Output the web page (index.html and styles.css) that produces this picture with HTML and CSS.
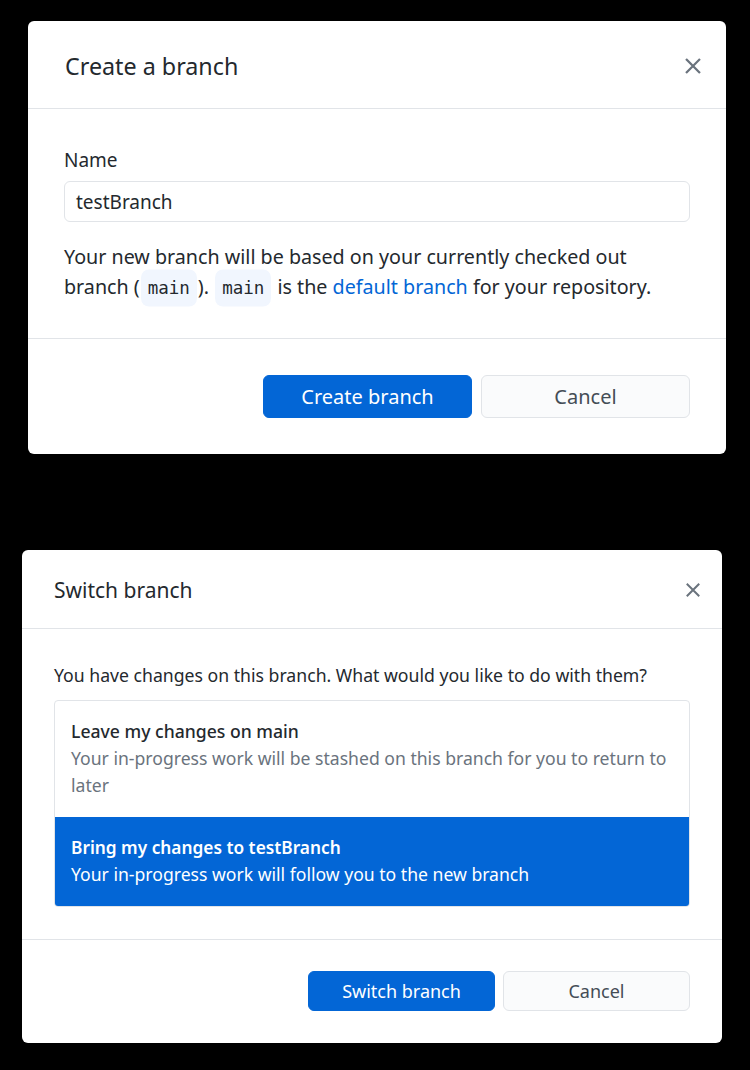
FILE: index.html
```html
<!DOCTYPE html>
<html lang="en">
<head>
<meta charset="utf-8">
<title>Branch dialogs</title>
<link rel="stylesheet" href="styles.css">
</head>
<body>
<div class="page">
  <section class="dialog dialog-create">
    <header class="dialog-header">
      <h1 class="dialog-title">Create a branch</h1>
      <span class="close" aria-label="Close">
        <svg viewBox="0 0 16 16" width="18" height="18"><path d="M2.5 2.5 L13.5 13.5 M13.5 2.5 L2.5 13.5" stroke="#6a737d" stroke-width="2" stroke-linecap="square" fill="none"/></svg>
      </span>
    </header>
    <div class="dialog-body">
      <label class="field-label">Name</label>
      <div class="text-input">testBranch</div>
      <p class="note">Your new branch will be based on your currently checked out branch (<code class="ref">main</code>). <code class="ref">main</code> is the <span class="link">default branch</span> for your repository.</p>
    </div>
    <footer class="dialog-footer">
      <button class="btn btn-primary">Create branch</button>
      <button class="btn btn-default">Cancel</button>
    </footer>
  </section>

  <section class="dialog dialog-switch">
    <header class="dialog-header">
      <h1 class="dialog-title">Switch branch</h1>
      <span class="close" aria-label="Close">
        <svg viewBox="0 0 16 16" width="16" height="16"><path d="M2.5 2.5 L13.5 13.5 M13.5 2.5 L2.5 13.5" stroke="#6a737d" stroke-width="2" stroke-linecap="square" fill="none"/></svg>
      </span>
    </header>
    <div class="dialog-body">
      <p class="question">You have changes on this branch. What would you like to do with them?</p>
      <div class="options">
        <div class="option">
          <div class="option-title">Leave my changes on main</div>
          <div class="option-desc">Your in-progress work will be stashed on this branch for you to return to later</div>
        </div>
        <div class="option selected">
          <div class="option-title">Bring my changes to testBranch</div>
          <div class="option-desc">Your in-progress work will follow you to the new branch</div>
        </div>
      </div>
    </div>
    <footer class="dialog-footer">
      <button class="btn btn-primary">Switch branch</button>
      <button class="btn btn-default">Cancel</button>
    </footer>
  </section>
</div>
</body>
</html>
```
FILE: styles.css
```css
* { box-sizing: border-box; }
html, body { margin: 0; padding: 0; }
body {
  background: #000;
  width: 750px;
  height: 1070px;
  font-family: "Noto Sans", "Open Sans", sans-serif;
  color: #24292e;
  overflow: hidden;
}
.page {
  display: flex;
  flex-direction: column;
  padding-top: 21px;
  gap: 96px;
}
.dialog {
  background: #fff;
  border-radius: 6px;
  display: flex;
  flex-direction: column;
}
.dialog-create { margin-left: 28px; width: 698px; height: 433px; }
.dialog-switch { margin-left: 22px; width: 700px; height: 493px; }

.dialog-header {
  display: flex;
  align-items: center;
  justify-content: space-between;
  border-bottom: 1px solid #e1e4e8;
}
.dialog-title { margin: 0; font-weight: 400; color: #24292e; }
.close { display: flex; align-items: center; justify-content: center; }

.dialog-create .dialog-header { height: 88px; padding: 3px 24px 0 37px; }
.dialog-create .dialog-title { font-size: 23.3px; }
.dialog-switch .dialog-header { height: 79px; padding: 1px 21px 0 32px; }
.dialog-switch .dialog-title { font-size: 21px; }

.dialog-create .dialog-body { padding: 38px 36px 35px; border-bottom: 1px solid #e1e4e8; }
.field-label { display: block; font-size: 19px; line-height: 26px; margin-bottom: 8px; }
.text-input {
  height: 41px;
  border: 1px solid #e1e4e8;
  border-radius: 6px;
  padding: 1px 11px 0;
  font-size: 19px;
  line-height: 39px;
}
.note { margin: 20px 0 0; font-size: 19.7px; line-height: 30px; }
.ref {
  display: inline-block;
  font-family: "DejaVu Sans Mono", "Liberation Mono", monospace;
  font-size: 17.5px;
  line-height: 30px;
  color: #24292e;
  background: #f1f6fe;
  border-radius: 8px;
  padding: 0 7px;
  margin: 0 1px;
  box-shadow: 0 3.5px 0 #f1f6fe, 0 -3.5px 0 #f1f6fe;
}
.link { color: #0366d6; }

.dialog-footer { display: flex; justify-content: flex-end; }
.dialog-create .dialog-footer { padding: 36px 36px 0; gap: 9px; }
.dialog-switch .dialog-footer { padding: 31px 32px 0; gap: 8px; }
.btn {
  font-family: inherit;
  border-radius: 6px;
  border: 1px solid #e1e4e8;
  cursor: pointer;
}
.dialog-create .btn { width: 209px; height: 43px; font-size: 20px; }
.dialog-switch .btn { width: 187px; height: 40px; font-size: 18px; }
.btn-primary { background: #0366d6; color: #fff; border-color: #0366d6; }
.btn-default { background: #fafbfc; color: #444d56; }

.dialog-switch .dialog-body { padding: 33px 32px 32px; border-bottom: 1px solid #e1e4e8; }
.question { margin: 0 0 11px; font-size: 17.65px; line-height: 27px; }
.options {
  border: 1px solid #e1e4e8;
  border-radius: 4px;
  overflow: hidden;
}
.option { padding: 17px 16px; font-size: 17.6px; line-height: 27px; }
.option:first-child { height: 116px; }
.option.selected { height: 89px; padding-top: 17px; }
.option-title { font-weight: 500; color: #24292e; }
.option-desc { color: #6a737d; }
.option.selected { background: #0366d6; }
.option.selected .option-title,
.option.selected .option-desc { color: #fff; }
.option.selected .option-title { font-weight: 600; font-size: 17.3px; }
```
